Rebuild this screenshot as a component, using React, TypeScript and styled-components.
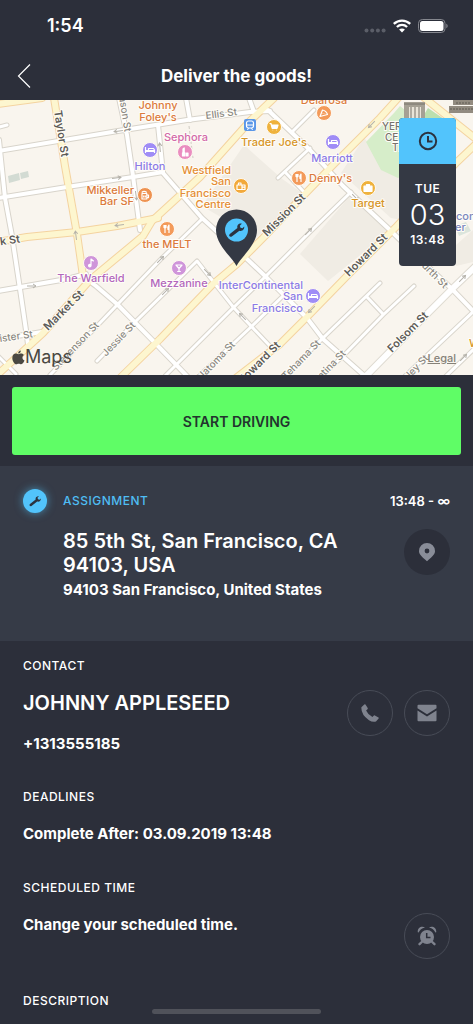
import React from "react";
import styled, { createGlobalStyle } from "styled-components";

const GlobalStyle = createGlobalStyle`
  *, *::before, *::after { box-sizing: border-box; }
  body {
    margin: 0;
    background: #2c2f3a;
    color: #fff;
    font-family: Inter, "Liberation Sans", sans-serif;
  }
  h1, h2, h3, p { margin: 0; }
  button { font: inherit; color: inherit; border: 0; padding: 0; cursor: pointer; }
  a { color: inherit; text-decoration: none; }
`;

const Screen = styled.div`
  height: 100vh;
  overflow: hidden;
  display: flex;
  flex-direction: column;
  background: #2c2f3a;
  & > * { flex-shrink: 0; }
`;

const StatusBar = styled.div`
  height: 52px;
  padding: 0 25px 0 47px;
  display: flex;
  justify-content: space-between;
  align-items: center;
`;

const StatusTime = styled.span`
  font-size: 18px;
  font-weight: 600;
  line-height: 24px;
`;

const StatusIcons = styled.div`
  display: flex;
  align-items: center;
  gap: 7px;
`;

const NavBar = styled.header`
  height: 48px;
  display: grid;
  grid-template-columns: 48px 1fr 48px;
  align-items: center;
`;

const BackButton = styled.button`
  height: 48px;
  background: none;
  display: flex;
  align-items: center;
  justify-content: center;
`;

const NavTitle = styled.h1`
  font-size: 17px;
  line-height: 24px;
  font-weight: 700;
  text-align: center;
`;

const MapPanel = styled.section`
  position: relative;
  height: 275px;
  overflow: hidden;
  background: #f9f5ee;
`;

const MapDrawing = styled.svg`
  display: block;
  width: 100%;
  height: 100%;
`;

const Attribution = styled.div`
  position: absolute;
  left: 12px;
  bottom: 8px;
  display: flex;
  align-items: center;
  color: #4a4842;
  font-size: 18px;
  line-height: 20px;
  font-weight: 400;
`;

const LegalLink = styled.a`
  position: absolute;
  right: 17px;
  bottom: 10px;
  color: #858178;
  font-size: 11px;
  line-height: 14px;
  font-weight: 500;
  && { text-decoration: underline; }
`;

const TimeCard = styled.div`
  position: absolute;
  top: 18px;
  right: 17px;
  width: 57px;
  height: 148px;
  border-radius: 4px;
  overflow: hidden;
  background: #343944;
  display: flex;
  flex-direction: column;
  align-items: center;
`;

const TimeCardIcon = styled.div`
  align-self: stretch;
  height: 46px;
  margin-bottom: 16px;
  background: #52c4fc;
  display: flex;
  align-items: center;
  justify-content: center;
`;

const CardLabel = styled.span`
  font-size: 12px;
  line-height: 18px;
  font-weight: 600;
  letter-spacing: 0.5px;
`;

const CardDay = styled.span`
  font-size: 29px;
  line-height: 33px;
  font-weight: 300;
`;

const ActionBar = styled.div`
  padding: 12px 12px 11px;
`;

const StartButton = styled.button`
  width: 100%;
  height: 68px;
  border-radius: 3px;
  background: #5ffd66;
  && {
    color: #23342e;
    font-size: 14px;
    font-weight: 600;
  }
`;

const Assignment = styled.section`
  display: grid;
  grid-template-columns: 24px 1fr 46px;
  column-gap: 16px;
  padding: 23px 23px 39px;
  background: #363b47;
`;

const AssignmentHead = styled.div`
  grid-column: 2 / 4;
  display: flex;
  align-items: center;
  justify-content: space-between;
`;

const WrenchBadge = styled.div`
  width: 24px;
  height: 24px;
  border-radius: 50%;
  background: #52c4fc;
  box-shadow: 0 0 8px rgba(82, 196, 252, 0.6);
  display: flex;
  align-items: center;
  justify-content: center;
`;

const Eyebrow = styled.h2<{ $accent?: boolean }>`
  font-size: 12px;
  line-height: 16px;
  font-weight: 500;
  letter-spacing: 0.5px;
  color: ${(p) => (p.$accent ? "#4fbdf3" : "#fff")};
`;

const TimeRange = styled.span`
  font-size: 13px;
  line-height: 16px;
  font-weight: 600;
`;

const Address = styled.div`
  grid-column: 2;
  padding-top: 16px;
  display: flex;
  flex-direction: column;
  gap: 1px;
`;

const LargeText = styled.p`
  font-size: 20px;
  line-height: 24px;
  font-weight: 600;
`;

const BodyText = styled.p`
  font-size: 15px;
  line-height: 24px;
  font-weight: 700;
`;

const RoundButton = styled.button<{ $filled?: boolean }>`
  width: 46px;
  height: 46px;
  border-radius: 50%;
  background: ${(p) => (p.$filled ? "#2c2f3a" : "transparent")};
  border: ${(p) => (p.$filled ? "0" : "1px solid #484c57")};
  display: flex;
  align-items: center;
  justify-content: center;
  && { color: #7f838e; }
`;

const AddressAction = styled.div`
  grid-column: 3;
  padding-top: 16px;
`;

const Details = styled.main`
  padding: 17px 23px 0;
`;

const Block = styled.section<{ $gap: number }>`
  margin-bottom: ${(p) => p.$gap}px;
`;

const Row = styled.div<{ $top: number }>`
  display: flex;
  align-items: flex-start;
  justify-content: space-between;
  padding-top: ${(p) => p.$top}px;
`;

const ContactText = styled.div`
  display: flex;
  flex-direction: column;
  gap: 17px;
  padding-top: 1px;
`;

const Buttons = styled.div`
  display: flex;
  gap: 11px;
`;

const HomeIndicator = styled.div`
  position: fixed;
  bottom: 10px;
  left: 50%;
  width: 169px;
  height: 5px;
  margin-left: -85px;
  border-radius: 3px;
  background: #50525a;
`;

const Wrench = () => (
  <path
    fill="#2b3340"
    d="M-6.700 4.100 L.9 -1.900 C.2 -4.600 2.400 -6.900 5.300 -6.300 L3.300 -4.300 L4 -2.200 L6 -1.700 L7.700 -3.500 C8.200 -.6 5.600 1.600 2.900 .7 L-4.700 6.600 C-6.700 7.600 -8.300 5.600 -6.700 4.100 Z"
  />
);

type RoadKind = "main" | "wide" | "street" | "lane";
const roadStyle: Record<RoadKind, { w: number; edge: string; fill: string }> = {
  main: { w: 7, edge: "#f4d3a0", fill: "#fdf6cf" },
  wide: { w: 7, edge: "#dfdbd2", fill: "#ffffff" },
  street: { w: 5, edge: "#d8d4cb", fill: "#ffffff" },
  lane: { w: 4, edge: "#d9d5cc", fill: "#ffffff" },
};

const roads: { k: RoadKind; d: string }[] = [
  { k: "lane", d: "M-4 128 L7 125" },
  { k: "lane", d: "M50 375 L97 326 L160 260 L202 219" },
  { k: "lane", d: "M97 361 L133 324 L197 261 L234 308 L270 346" },
  { k: "lane", d: "M165 376 L233 308 L265 277 L310 232 L351 192" },
  { k: "lane", d: "M200 375 L252 326 L286 293" },
  { k: "lane", d: "M283 378 L323 338 L380 283" },
  { k: "lane", d: "M320 378 L345 354 L383 315 L414 286" },
  { k: "lane", d: "M367 297 L383 314" },
  { k: "lane", d: "M405 376 L475 310" },
  { k: "lane", d: "M445 377 L475 348" },
  { k: "lane", d: "M278 178 L310 148" },
  { k: "lane", d: "M285 172 L304 192" },
  { k: "lane", d: "M293 131 L314 110" },
  { k: "lane", d: "M-2 356 L16 374" },
  { k: "street", d: "M-2 151 L118 131 L187 120 L250 112 L270 111" },
  { k: "street", d: "M-2 198 L67 187 L133 177 L163 172" },
  { k: "street", d: "M-1 140 L5 198 L12 236 L20 289 L28 344" },
  { k: "street", d: "M119 98 L127 135 L133 176 L140 230" },
  { k: "street", d: "M-2 291 L67 279 L86 274" },
  { k: "street", d: "M-2 339 L42 332" },
  { k: "street", d: "M186 98 L190 120" },
  { k: "street", d: "M249 98 L254 112" },
  { k: "street", d: "M158 125 L163 173 L202 218 L247 259 L265 276 L307 318 L323 339 L367 378" },
  { k: "street", d: "M85 278 L96 286 L117 304 L158 346 L187 376" },
  { k: "street", d: "M268 110 L310 150 L343 186 L390 230 L427 266 L452 289 L476 314" },
  { k: "wide", d: "M364 378 L427 314 L452 289 L476 266" },
  { k: "main", d: "M-2 104 L42 98" },
  { k: "main", d: "M54 98 L65 166 L77 234 L83 276" },
  { k: "main", d: "M-2 242 L27 237 L77 232 L117 226 L158 218" },
  { k: "main", d: "M422 96 L476 139" },
  { k: "main", d: "M236 378 L280 344 L310 314 L347 276 L397 226 L457 162 L476 144" },
  { k: "main", d: "M-4 376 L43 333 L90 280 L143 236 L152 221 L200 177 L250 121 L274 98" },
  { k: "main", d: "M121 377 L160 339 L213 284 L237 264 L263 238 L303 196 L333 165 L380 118 L399 97" },
];

interface MapLabel {
  x: number;
  y: number;
  t: string;
  c: string;
  s?: number;
  a?: "start" | "middle" | "end";
  r?: number;
  w?: number;
}
const orange = "#db7a3c";
const amber = "#e48e35";
const gold = "#d69527";
const violet = "#8b7be6";
const pink = "#d26aa9";
const plum = "#b267bd";
const grey = "#8b8983";
const dark = "#5d5b57";

const labels: MapLabel[] = [
  { x: 158, y: 109, t: "Johnny", c: orange, a: "middle" },
  { x: 158, y: 121, t: "Foley's", c: orange, a: "middle" },
  { x: 186, y: 141, t: "Sephora", c: pink, a: "middle" },
  { x: 150, y: 170, t: "Hilton", c: violet, a: "middle" },
  { x: 134, y: 194, t: "Mikkeller", c: orange, a: "end" },
  { x: 134, y: 205, t: "Bar SF", c: orange, a: "end" },
  { x: 231, y: 174, t: "Westfield", c: amber, a: "end" },
  { x: 231, y: 185, t: "San", c: amber, a: "end" },
  { x: 231, y: 197, t: "Francisco", c: amber, a: "end" },
  { x: 231, y: 208, t: "Centre", c: amber, a: "end" },
  { x: 274, y: 146, t: "Trader Joe's", c: gold, a: "middle" },
  { x: 324, y: 104, t: "Delarosa", c: orange, a: "middle" },
  { x: 332, y: 162, t: "Marriott", c: violet, a: "middle" },
  { x: 309, y: 182, t: "Denny's", c: orange },
  { x: 368, y: 207, t: "Target", c: gold, a: "middle" },
  { x: 167, y: 248, t: "the MELT", c: orange, a: "middle" },
  { x: 91, y: 282, t: "The Warfield", c: plum, a: "middle" },
  { x: 179, y: 287, t: "Mezzanine", c: plum, a: "middle" },
  { x: 303, y: 289, t: "InterContinental", c: violet, a: "end" },
  { x: 303, y: 300, t: "San", c: violet, a: "end" },
  { x: 303, y: 312, t: "Francisco", c: violet, a: "end" },
  { x: 382, y: 130, t: "YERBA", c: "#77736c", s: 10 },
  { x: 385, y: 141, t: "CENTER", c: "#77736c", s: 10 },
  { x: 392, y: 151, t: "THE", c: "#77736c", s: 10 },
  { x: 456, y: 220, t: "con", c: "#7b87bd" },
  { x: 455, y: 231, t: "er", c: "#7b87bd" },
  { x: 469, y: 347, t: "W", c: gold },
  { x: 54, y: 111, t: "Taylor St", c: dark, r: 81, w: 600 },
  { x: 119, y: 97, t: "ason St", c: grey, s: 10, r: 81 },
  { x: 206, y: 119, t: "Ellis St", c: grey, s: 10, r: -7 },
  { x: 267, y: 237, t: "Mission St", c: dark, r: -45, w: 600 },
  { x: 349, y: 277, t: "Howard St", c: dark, r: -45, w: 600 },
  { x: 392, y: 353, t: "Folsom St", c: dark, r: -45, w: 600 },
  { x: 48, y: 331, t: "Market St", c: dark, r: -45, w: 600 },
  { x: 242, y: 385, t: "Howard St", c: dark, r: -45, w: 600 },
  { x: -4, y: 246, t: "rk St", c: dark, r: -8, w: 600 },
  { x: 0, y: 342, t: "ister St", c: grey, s: 10, r: -8 },
  { x: 56, y: 371, t: "Stevenson St", c: grey, s: 10, r: -46 },
  { x: 106, y: 357, t: "Jessie St", c: grey, s: 10, r: -46 },
  { x: 201, y: 381, t: "Natoma St", c: grey, s: 10, r: -46 },
  { x: 286, y: 380, t: "Tehama St", c: grey, s: 10, r: -46 },
  { x: 300, y: 402, t: "Clementina St", c: grey, s: 10, r: -46 },
  { x: 396, y: 393, t: "Shipley St", c: grey, s: 10, r: -46 },
  { x: 413, y: 258, t: "Fourth St", c: grey, s: 10, r: 45 },
];

type Glyph = "bed" | "fork" | "cart" | "bag" | "note" | "glass" | "lipstick" | "pizza" | "mug" | "case";
const pins: { x: number; y: number; c: string; g: Glyph }[] = [
  { x: 150, y: 150, c: "#9f8cf6", g: "bed" },
  { x: 333, y: 142, c: "#9f8cf6", g: "bed" },
  { x: 313, y: 296, c: "#9f8cf6", g: "bed" },
  { x: 145, y: 195, c: "#ee9250", g: "mug" },
  { x: 185, y: 152, c: "#ea8dc0", g: "lipstick" },
  { x: 241, y: 186, c: "#f2a93b", g: "bag" },
  { x: 274, y: 127, c: "#efb23c", g: "cart" },
  { x: 324, y: 113, c: "#f39a5a", g: "pizza" },
  { x: 299, y: 178, c: "#f39a5a", g: "fork" },
  { x: 167, y: 229, c: "#f39a5a", g: "fork" },
  { x: 368, y: 188, c: "#efb23c", g: "case" },
  { x: 91, y: 263, c: "#cf95da", g: "note" },
  { x: 179, y: 268, c: "#cf95da", g: "glass" },
];

const glyphs: Record<Glyph, React.ReactNode> = {
  bed: <path d="M-4.500 -3 V3 M-4.500 1.500 H4.500 M4.500 3 V0 L3.500 -1.500 H-1.500 V.5 H4 M-4 .5 H-2" />,
  fork: <path d="M-3 -4 V-1.500 Q-2 0 -1 -1.500 V-4 M-2 -4 V4 M2 4 V-4 Q0.500 -2.500 1 0.500 H2" />,
  cart: <path fill="#fff" d="M-4.500 -3.500 H-3 L-1.800 1.300 H3 L4 -2 H-2.500 M-1.300 3.200 H-.9 M2.400 3.200 H2.800" />,
  bag: <path d="M-4 -1 H1 V3.500 H-4 Z M-2.500 -1 V-3 H0 V-1 M1 -1 H4 V3.500 H1 M1.500 1.200 H4" />,
  note: <path fill="#fff" d="M0 2.500 V-4 L2.500 -2 L0 -3 M0 2.500 A1.200 1.200 0 1 1 -.8 1.500 Z" />,
  glass: <path d="M-3 -3 H3 L0 .5 Z M0 .5 V3.500 M-1.800 3.500 H1.800" />,
  lipstick: <path fill="#fff" d="M-2.500 4 V.8 H0 V4 Z M-2 .8 V-3 L-.8 -4 V.8 M1.500 4 V1 H3 V4 Z" />,
  pizza: <path d="M-4 3.500 L-1.500 -3 Q2.500 -2 3.500 1.500 Z M-1 .6 V1 M.8 .2 V.6" />,
  mug: <path d="M-3 -1.500 H1.800 V4 H-3 Z M1.800 0 H3.500 V2.600 H1.800 M-3.300 -2.500 Q-1 -4.600 1.800 -2.500 M-1.300 .5 V2.500 M.3 .5 V2.500" />,
  case: <path fill="#fff" d="M-4 -1.800 H4 V3.300 H-4 Z M-1.500 -1.800 V-3.500 H1.500 V-1.800" />,
};

const arrows: [number, number, number][] = [
  [119, 131, 172], [116, 178, -8], [120, 225, 172], [31, 286, 0], [76, 236, -97], [160, 148, -95],
  [160, 260, -45], [165, 292, -45], [207, 272, 45], [243, 317, 225], [372, 124, 135], [312, 309, 135],
  [355, 197, 45], [308, 232, -45], [462, 279, -45], [463, 358, -45], [136, 195, 82],
];

const CityMap = () => (
  <MapDrawing viewBox="0 100 473 275" preserveAspectRatio="xMidYMid slice" role="img" aria-label="Map of downtown San Francisco">
    <rect x="-10" y="90" width="500" height="300" fill="#f9f5ee" />
    <g fill="#f0ece4">
      <path d="M244 145 L281 178 L302 193 L256 238 L202 206 Z" />
      <path d="M350 196 L389 232 L328 281 L300 254 Z" />
      <path d="M364 138 L402 180 V220 L391 218 L341 173 Z" />
      <path d="M456 245 L473 230 V262 L456 266 Z" />
    </g>
    <path d="M366 142 L394 113 L400 106 L452 148 L398 178 L381 170 Z" fill="#d6edc9" />
    <path d="M428 108 L444 119 L434 128 L422 118 Z" fill="#bcdfae" />
    <path d="M8 176 L19 173 L20 180 L9 183 Z M20 173 L28 171 L29 177 L21 179 Z" fill="#d3dbd3" />
    <path d="M455 226 L466 222 L471 231 L459 236 Z" fill="#dbe5dc" />
    {roads.map((r) => (
      <path key={"e" + r.d} d={r.d} fill="none" stroke={roadStyle[r.k].edge} strokeWidth={roadStyle[r.k].w + 1} strokeLinejoin="round" strokeLinecap="round" />
    ))}
    {roads.map((r) => (
      <path key={"f" + r.d} d={r.d} fill="none" stroke={roadStyle[r.k].fill} strokeWidth={roadStyle[r.k].w - 1} strokeLinejoin="round" strokeLinecap="round" />
    ))}
    <path d="M189 126 L193 158" stroke="#cfcbc3" strokeDasharray="3 2" />
    {arrows.map(([x, y, r]) => (
      <path key={`${x}-${y}`} transform={`translate(${x} ${y}) rotate(${r})`} d="M-4 0 H5 M2 -2 L5 0 L2 2" fill="none" stroke="#b5b2aa" strokeWidth="1" />
    ))}
    <g>
      <path d="M404 102 H425 V119 H404 Z" fill="#a5a094" />
      <path d="M409 107 H421 V119 H409 Z" fill="#e9e4d8" />
      <path d="M411 107 V119 M415 107 V119 M419 107 V119 M404 104 H425" stroke="#77736a" strokeWidth="1" />
      <path d="M453 100 H473 V105 H453 Z M449 106 H473 V113 H449 Z" fill="#928b80" />
      <path d="M450 109 H473 M456 103 H470" stroke="#5f5a53" strokeWidth="1" strokeDasharray="2 1" />
    </g>
    {labels.map((l) => (
      <text
        key={`${l.t}${l.x}`}
        transform={`translate(${l.x} ${l.y}) rotate(${l.r ?? 0})`}
        fontSize={l.s ?? 11}
        fontWeight={l.w ?? 500}
        textAnchor={l.a ?? "start"}
        fill={l.c}
        stroke="#fffdf8"
        strokeWidth="2"
        strokeLinejoin="round"
        paintOrder="stroke"
      >
        {l.t}
      </text>
    ))}
    <g transform="translate(250 125)">
      <rect x="-6" y="-6" width="12" height="12" rx="2" fill="#5b97e8" />
      <rect x="-3.500" y="-4" width="7" height="7" rx="2" fill="none" stroke="#fff" strokeWidth="1.200" />
      <path d="M-3 0 H3 M-2.500 5 L-1.500 3 M2.500 5 L1.500 3" stroke="#fff" />
    </g>
    {pins.map((p) => (
      <g key={`${p.x}-${p.y}`} transform={`translate(${p.x} ${p.y})`} fill="none" stroke="#fff" strokeWidth="1.200" strokeLinejoin="round">
        <circle r="7.500" fill={p.c} stroke="#fffaf2" strokeWidth="1" />
        {glyphs[p.g]}
      </g>
    ))}
    <path d="M236.500 266 C232 257 216 245 216 230 A20.500 20.500 0 0 1 257 230 C257 245 241 257 236.500 266 Z" fill="#343944" />
    <circle cx="236.500" cy="230" r="11.500" fill="#52c4fc" />
    <g transform="translate(236.500 230)">
      <Wrench />
    </g>
  </MapDrawing>
);

export default function App() {
  return (
    <Screen>
      <GlobalStyle />
      <StatusBar>
        <StatusTime>1:54</StatusTime>
        <StatusIcons>
          <svg width="22" height="14" viewBox="0 0 22 14" fill="#5b5e68" aria-hidden="true">
            <circle cx="2.500" cy="11.500" r="2" />
            <circle cx="8.200" cy="11.500" r="2" />
            <circle cx="13.900" cy="11.500" r="2" />
            <circle cx="19.600" cy="11.500" r="2" />
          </svg>
          <svg width="18" height="14" viewBox="0 0 18 14" aria-label="Wi-Fi">
            <g fill="none" stroke="#fff" strokeWidth="2.300">
              <path d="M.8 4.900 C5.500 .4 12.500 .4 17.200 4.900" />
              <path d="M3.900 8 C6.800 5.200 11.200 5.200 14.100 8" />
            </g>
            <path d="M6.100 10.500 C7.700 9 10.300 9 11.900 10.500 L9 13.500 Z" fill="#fff" />
          </svg>
          <svg width="30" height="14" viewBox="0 0 30 14" aria-label="Battery full">
            <rect x=".5" y=".5" width="26.500" height="13" rx="3.800" fill="none" stroke="#85878e" />
            <rect x="2" y="2" width="23.500" height="10" rx="2.500" fill="#fff" />
            <path d="M28.300 4.800 C30.100 5.500 30.100 8.500 28.300 9.200 Z" fill="#85878e" />
          </svg>
        </StatusIcons>
      </StatusBar>
      <NavBar>
        <BackButton aria-label="Back">
          <svg width="14" height="24" viewBox="0 0 14 24" fill="none" stroke="#fff" strokeWidth="1.200">
            <path d="M13 .5 L1.500 12 L13 23.500" />
          </svg>
        </BackButton>
        <NavTitle>Deliver the goods!</NavTitle>
      </NavBar>

      <MapPanel>
        <CityMap />
        <Attribution>
          <svg width="13" height="15" viewBox="0 0 13 15" fill="#4a4842" aria-hidden="true">
            <path d="M8.800 .4 C8.900 2.100 7.600 3.500 6.100 3.500 C6 2 7.300 .6 8.800 .4 Z" />
            <path d="M6.400 4.300 C7.100 4.300 8 3.600 9.200 3.600 C10.400 3.600 11.400 4.200 12 5.100 C9.700 6.500 10.100 9.700 12.500 10.600 C11.800 12.400 10.600 14.300 9.200 14.300 C8.200 14.300 7.900 13.700 6.700 13.700 C5.500 13.700 5.100 14.300 4.200 14.300 C2.500 14.300 .3 11 .3 8 C.3 5.100 2.100 3.600 3.900 3.600 C5 3.600 5.800 4.300 6.400 4.300 Z" />
          </svg>
          Maps
        </Attribution>
        <LegalLink href="#legal">Legal</LegalLink>
        <TimeCard>
          <TimeCardIcon>
            <svg width="20" height="20" viewBox="0 0 20 20" fill="none" stroke="#2b3340" strokeWidth="2" aria-hidden="true">
              <circle cx="10" cy="10" r="8.200" />
              <path d="M10 5 V10.500 H14.500" />
            </svg>
          </TimeCardIcon>
          <CardLabel>TUE</CardLabel>
          <CardDay>03</CardDay>
          <CardLabel>13:48</CardLabel>
        </TimeCard>
      </MapPanel>

      <ActionBar>
        <StartButton>START DRIVING</StartButton>
      </ActionBar>

      <Assignment>
        <WrenchBadge>
          <svg width="12" height="12" viewBox="-8 -8 16 16" aria-hidden="true">
            <Wrench />
          </svg>
        </WrenchBadge>
        <AssignmentHead>
          <Eyebrow $accent>ASSIGNMENT</Eyebrow>
          <TimeRange>13:48 - ∞</TimeRange>
        </AssignmentHead>
        <Address>
          <LargeText>85 5th St, San Francisco, CA 94103, USA</LargeText>
          <BodyText>94103 San Francisco, United States</BodyText>
        </Address>
        <AddressAction>
          <RoundButton $filled aria-label="Show on map">
            <svg width="16" height="20" viewBox="0 0 16 20" fill="#898d98">
              <path fillRule="evenodd" d="M8 1 A8 8 0 0 1 16 9 C16 12 14.500 13.500 8 19.300 C1.500 13.500 0 12 0 9 A8 8 0 0 1 8 1 Z M8 6.600 A2.400 2.400 0 1 0 8 11.400 A2.400 2.400 0 1 0 8 6.600 Z" />
            </svg>
          </RoundButton>
        </AddressAction>
      </Assignment>

      <Details>
        <Block $gap={33}>
          <Eyebrow>CONTACT</Eyebrow>
          <Row $top={16}>
            <ContactText>
              <LargeText>JOHNNY APPLESEED</LargeText>
              <BodyText>+1313555185</BodyText>
            </ContactText>
            <Buttons>
              <RoundButton aria-label="Call">
                <svg width="18" height="18" viewBox="0 0 18 18" fill="currentColor">
                  <path d="M.4 3.300 L3.300 .4 Q4 -.1 4.500 .6 L6.700 4.100 Q7 4.700 6.500 5.200 L5.100 6.500 Q6.900 10.700 11.400 12.900 L12.900 11.500 Q13.400 11.100 13.900 11.400 L17.500 13.600 Q18.100 14 17.600 14.600 L15 17.500 Q11.500 18.500 8 16.200 Q-.2 10.500 .4 3.300 Z" />
                </svg>
              </RoundButton>
              <RoundButton aria-label="Email">
                <svg width="20" height="18" viewBox="0 0 20 18" fill="currentColor">
                  <path d="M1.500 .8 H18.500 Q19.500 .8 19.500 1.800 V4.200 L10 10.200 L.5 4.200 V1.800 Q.5 .8 1.500 .8 Z" />
                  <path d="M.5 6.600 L10 12.400 L19.500 6.600 V16.200 Q19.500 17.200 18.500 17.200 H1.500 Q.5 17.200 .5 16.200 Z" />
                </svg>
              </RoundButton>
            </Buttons>
          </Row>
        </Block>
        <Block $gap={34}>
          <Eyebrow>DEADLINES</Eyebrow>
          <Row $top={17}>
            <BodyText>Complete After: 03.09.2019 13:48</BodyText>
          </Row>
        </Block>
        <Block $gap={34}>
          <Eyebrow>SCHEDULED TIME</Eyebrow>
          <Row $top={17}>
            <BodyText>Change your scheduled time.</BodyText>
            <RoundButton aria-label="Change scheduled time">
              <svg width="20" height="20" viewBox="0 0 20 20" fill="currentColor">
                <path d="M.8 6.200 C.2 2.500 4.200 -.6 8 1.600 C4.500 2.400 3 4 1.600 6.600 Z M19.200 6.200 C19.800 2.500 15.800 -.6 12 1.600 C15.500 2.400 17 4 18.400 6.600 Z" />
                <path d="M4.800 16 L2.500 18.200 M15.200 16 L17.500 18.200" stroke="currentColor" strokeWidth="2.400" strokeLinecap="round" />
                <circle cx="10" cy="11" r="7" />
                <path d="M9.700 7 V11.500 H13.500" fill="none" stroke="#2c2f3a" strokeWidth="1.500" />
              </svg>
            </RoundButton>
          </Row>
        </Block>
        <Block $gap={16}>
          <Eyebrow>DESCRIPTION</Eyebrow>
        </Block>
      </Details>
      <HomeIndicator />
    </Screen>
  );
}
